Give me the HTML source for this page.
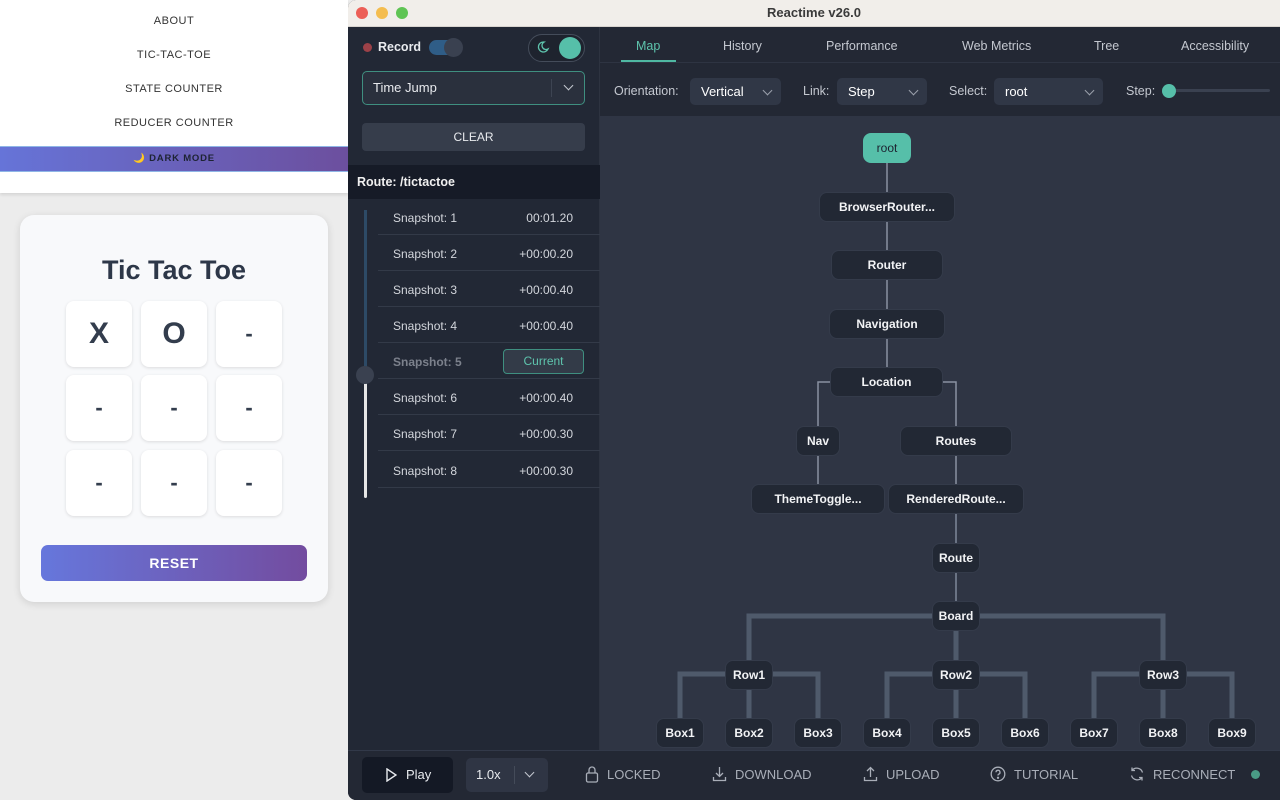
<!DOCTYPE html>
<html><head><meta charset="utf-8"><style>
*{box-sizing:border-box;margin:0;padding:0}
body{width:1280px;height:800px;overflow:hidden;background:#ececec;font-family:"Liberation Sans",sans-serif;position:relative}
.abs{position:absolute}
.nav a{position:absolute;left:0;width:348px;text-align:center;font-size:11px;color:#333;letter-spacing:.5px}
.cell{position:absolute;width:66px;height:66px;background:#fff;border-radius:8px;box-shadow:0 1px 3px rgba(0,0,0,.12);text-align:center;line-height:66px;font-weight:bold;color:#333d4d}
.win{position:absolute;left:348px;top:0;width:932px;height:800px;border-radius:8px 0 0 8px;overflow:hidden;background:#222835;color:#e8eaee;font-size:13px}
.node{position:absolute;height:30px;border-radius:8px;background:#222834;border:1px solid #343b4a;color:#f2f3f5;font-size:12px;font-weight:bold;text-align:center;line-height:28px}
.snap{position:absolute;left:30px;width:222px;height:36px;border-bottom:1px solid #333a48;font-size:12px;color:#d3d6dc;line-height:38px}
.snap span{position:absolute;left:15px}
.snap b{position:absolute;right:27px;font-weight:normal}
.tab{position:absolute;top:39px;font-size:12.5px;color:#c4c8d0}
.sel{position:absolute;top:78px;height:27px;background:#303746;border-radius:5px;font-size:13px;color:#fff;padding-left:11px;line-height:27px}
.lbl{position:absolute;top:84px;font-size:12.5px;color:#c4c8d0}
.chev{position:absolute;right:10px;top:9px;width:7px;height:7px;border-right:1.3px solid #9aa0ab;border-bottom:1.3px solid #9aa0ab;transform:rotate(45deg)}
.bb{position:absolute;top:767px;font-size:13px;color:#a9aeb8}
</style></head><body>
<div class="abs" style="left:0;top:0;width:348px;height:193px;background:#fff;box-shadow:0 2px 3px rgba(0,0,0,.1)"></div>
<div class="nav"><a style="top:15px">ABOUT</a><a style="top:49px">TIC-TAC-TOE</a><a style="top:83px">STATE COUNTER</a><a style="top:117px">REDUCER COUNTER</a></div>
<div class="abs" style="left:0;top:146px;width:348px;height:26px;background:linear-gradient(90deg,#6674d8,#6c4f9e);border-top:1px solid #8fb6e6;border-bottom:1px solid #8fb6e6;text-align:center;line-height:24px;font-size:9.5px;font-weight:bold;letter-spacing:.8px;color:#1d2333">🌙 DARK MODE</div>
<div class="abs" style="left:20px;top:215px;width:308px;height:387px;background:#f8f9fb;border-radius:14px;box-shadow:0 2px 8px rgba(0,0,0,.12)"></div>
<div class="abs" style="left:20px;top:255px;width:308px;text-align:center;font-size:27px;font-weight:bold;color:#2d3748">Tic Tac Toe</div>
<div class="cell" style="left:66px;top:301px;font-size:30px">X</div><div class="cell" style="left:141px;top:301px;font-size:30px">O</div><div class="cell" style="left:216px;top:301px;font-size:22px">-</div>
<div class="cell" style="left:66px;top:375px;font-size:22px">-</div><div class="cell" style="left:141px;top:375px;font-size:22px">-</div><div class="cell" style="left:216px;top:375px;font-size:22px">-</div>
<div class="cell" style="left:66px;top:450px;font-size:22px">-</div><div class="cell" style="left:141px;top:450px;font-size:22px">-</div><div class="cell" style="left:216px;top:450px;font-size:22px">-</div>
<div class="abs" style="left:41px;top:545px;width:266px;height:36px;border-radius:7px;background:linear-gradient(90deg,#6677dc,#734c9f);color:#fff;text-align:center;line-height:36px;font-weight:bold;font-size:14px;letter-spacing:.5px">RESET</div>

<div class="win">
<div class="abs" style="left:0;top:0;width:932px;height:27px;background:#f1eeea;border-bottom:1px solid #d8d4cf"></div>
<div class="abs" style="left:8px;top:7px;width:12px;height:12px;border-radius:50%;background:#ec5f57"></div>
<div class="abs" style="left:28px;top:7px;width:12px;height:12px;border-radius:50%;background:#f4bd4f"></div>
<div class="abs" style="left:48px;top:7px;width:12px;height:12px;border-radius:50%;background:#5fc454"></div>
<div class="abs" style="left:0;top:5px;width:932px;text-align:center;font-size:13px;font-weight:bold;color:#3a3a3a">Reactime v26.0</div>

<div class="abs" style="left:0;top:27px;width:252px;height:723px;background:#222835;border-right:1px solid #2d3340"></div>
<div class="abs" style="left:15px;top:43px;width:9px;height:9px;border-radius:50%;background:#9c4148"></div>
<div class="abs" style="left:30px;top:40px;font-size:12.5px;font-weight:bold">Record</div>
<div class="abs" style="left:81px;top:40px;width:33px;height:15px;border-radius:8px;background:#2f5d87"></div>
<div class="abs" style="left:96px;top:38px;width:19px;height:19px;border-radius:50%;background:#3a4150"></div>
<div class="abs" style="left:180px;top:34px;width:57px;height:28px;border-radius:14px;border:1.5px solid #444c5a;background:#1e232e"></div>
<svg class="abs" style="left:188px;top:40px" width="14" height="14" viewBox="0 0 14 14"><path d="M8 2a5 5 0 1 0 4 7 4 4 0 0 1-4-7z" fill="none" stroke="#5ec4ad" stroke-width="1.3"/></svg>
<div class="abs" style="left:211px;top:37px;width:22px;height:22px;border-radius:50%;background:#56bfa9"></div>
<div class="abs" style="left:14px;top:71px;width:223px;height:34px;border:1.5px solid #3f8f80;border-radius:5px;background:#2a303d"></div>
<div class="abs" style="left:25px;top:80px;font-size:13px">Time Jump</div>
<div class="abs" style="left:203px;top:79px;width:1px;height:18px;background:#3d4452"></div>
<div class="chev" style="left:217px;top:82px;right:auto;border-color:#c4c8d0"></div>
<div class="abs" style="left:14px;top:123px;width:223px;height:28px;border-radius:4px;background:#363d4b;text-align:center;line-height:28px;font-size:12px;color:#e8eaee">CLEAR</div>
<div class="abs" style="left:0;top:165px;width:252px;height:34px;background:#161b27;font-size:12.5px;line-height:34px;padding-left:9px;font-weight:bold;color:#f0f0f0">Route: /tictactoe</div>
<div class="abs" style="left:16px;top:210px;width:3px;height:165px;background:#2d4a66"></div>
<div class="abs" style="left:16px;top:375px;width:3px;height:123px;background:#e6e6e6;border-radius:2px"></div>
<div class="abs" style="left:8px;top:366px;width:18px;height:18px;border-radius:50%;background:#3a4150"></div>
<div class="snap" style="top:199px"><span>Snapshot: 1</span><b style="right:27px">00:01.20</b></div>
<div class="snap" style="top:235px"><span>Snapshot: 2</span><b>+00:00.20</b></div>
<div class="snap" style="top:271px"><span>Snapshot: 3</span><b>+00:00.40</b></div>
<div class="snap" style="top:307px"><span>Snapshot: 4</span><b>+00:00.40</b></div>
<div class="snap" style="top:343px"><span style="color:#7c818c;font-weight:bold">Snapshot: 5</span></div>
<div class="abs" style="left:155px;top:349px;width:81px;height:25px;border:1.2px solid #3f8f80;border-radius:4px;background:#333b48;color:#5ec4ad;font-size:12px;text-align:center;line-height:23px">Current</div>
<div class="snap" style="top:379px"><span>Snapshot: 6</span><b>+00:00.40</b></div>
<div class="snap" style="top:415px"><span>Snapshot: 7</span><b>+00:00.30</b></div>
<div class="snap" style="top:452px"><span>Snapshot: 8</span><b>+00:00.30</b></div>

<div class="abs" style="left:252px;top:27px;width:680px;height:89px;background:#232834"></div>
<div class="abs" style="left:252px;top:62px;width:680px;height:1px;background:#2e3442"></div>
<div class="tab" style="left:288px;color:#5ec4ad">Map</div>
<div class="abs" style="left:273px;top:60px;width:55px;height:2px;background:#4fb8a2"></div>
<div class="tab" style="left:375px">History</div>
<div class="tab" style="left:478px">Performance</div>
<div class="tab" style="left:614px">Web Metrics</div>
<div class="tab" style="left:746px">Tree</div>
<div class="tab" style="left:833px">Accessibility</div>
<div class="lbl" style="left:266px">Orientation:</div>
<div class="sel" style="left:342px;width:91px">Vertical<i class="chev"></i></div>
<div class="lbl" style="left:455px">Link:</div>
<div class="sel" style="left:489px;width:90px">Step<i class="chev"></i></div>
<div class="lbl" style="left:601px">Select:</div>
<div class="sel" style="left:646px;width:109px">root<i class="chev"></i></div>
<div class="lbl" style="left:778px">Step:</div>
<div class="abs" style="left:820px;top:89px;width:102px;height:3px;border-radius:2px;background:#3a4150"></div>
<div class="abs" style="left:814px;top:84px;width:14px;height:14px;border-radius:50%;background:#56bfa9"></div>
<div class="abs" style="left:252px;top:116px;width:680px;height:634px;background:#2f3544"></div>

<svg class="abs" style="left:0;top:0" width="932" height="800" fill="none">
<g stroke="#8a92a2" stroke-width="1.5">
<path d="M539 162V192M539 221V250M539 279V309M539 338V367"/>
<path d="M482 382H470V426M595 382H608V426M470 455V484M608 455V484"/>
</g>
<g stroke="#7f8899" stroke-width="1.5"><path d="M608 513V543M608 572V601"/></g>
<g stroke="#4f5a6b" stroke-width="5">
<path d="M584 616H401V660M632 616H815V660M608 630V660"/>
<path d="M377 674H332V718M425 674H470V718M401 689V718"/>
<path d="M584 674H539V718M632 674H677V718M608 689V718"/>
<path d="M791 674H746V718M839 674H884V718M815 689V718"/>
</g>
</svg>
<div class="node" style="left:515px;top:133px;width:48px;background:#56bfa9;border-color:#56bfa9;color:#1d2230;font-weight:normal">root</div>
<div class="node" style="left:471px;top:192px;width:136px">BrowserRouter...</div>
<div class="node" style="left:483px;top:250px;width:112px">Router</div>
<div class="node" style="left:481px;top:309px;width:116px">Navigation</div>
<div class="node" style="left:482px;top:367px;width:113px">Location</div>
<div class="node" style="left:448px;top:426px;width:44px">Nav</div>
<div class="node" style="left:552px;top:426px;width:112px">Routes</div>
<div class="node" style="left:403px;top:484px;width:134px">ThemeToggle...</div>
<div class="node" style="left:540px;top:484px;width:136px">RenderedRoute...</div>
<div class="node" style="left:584px;top:543px;width:48px">Route</div>
<div class="node" style="left:584px;top:601px;width:48px">Board</div>
<div class="node" style="left:377px;top:660px;width:48px">Row1</div>
<div class="node" style="left:584px;top:660px;width:48px">Row2</div>
<div class="node" style="left:791px;top:660px;width:48px">Row3</div>
<div class="node" style="left:308px;top:718px;width:48px">Box1</div>
<div class="node" style="left:377px;top:718px;width:48px">Box2</div>
<div class="node" style="left:446px;top:718px;width:48px">Box3</div>
<div class="node" style="left:515px;top:718px;width:48px">Box4</div>
<div class="node" style="left:584px;top:718px;width:48px">Box5</div>
<div class="node" style="left:653px;top:718px;width:48px">Box6</div>
<div class="node" style="left:722px;top:718px;width:48px">Box7</div>
<div class="node" style="left:791px;top:718px;width:48px">Box8</div>
<div class="node" style="left:860px;top:718px;width:48px">Box9</div>

<div class="abs" style="left:0;top:750px;width:932px;height:50px;background:#232834;border-top:1px solid #323949"></div>
<div class="abs" style="left:14px;top:757px;width:91px;height:36px;border-radius:5px;background:#141925"></div>
<svg class="abs" style="left:37px;top:768px" width="12" height="14"><path d="M2 1L11 7L2 13Z" fill="none" stroke="#e8eaee" stroke-width="1.4"/></svg>
<div class="abs" style="left:58px;top:767px;font-size:13px">Play</div>
<div class="abs" style="left:118px;top:758px;width:82px;height:34px;border-radius:5px;background:#2f3544"></div>
<div class="abs" style="left:128px;top:767px;font-size:13px">1.0x</div>
<div class="abs" style="left:166px;top:766px;width:1px;height:18px;background:#444b59"></div>
<div class="chev" style="left:178px;top:769px;right:auto;border-color:#c4c8d0"></div>
<svg class="abs" style="left:237px;top:765px" width="14" height="18" fill="none" stroke="#a9aeb8" stroke-width="1.3"><rect x="1.5" y="8" width="11" height="9" rx="1.5"/><path d="M4 8V5a3 3 0 0 1 6 0v3"/></svg>
<div class="bb" style="left:259px">LOCKED</div>
<svg class="abs" style="left:364px;top:766px" width="15" height="16" fill="none" stroke="#a9aeb8" stroke-width="1.3"><path d="M7.5 1v9M4 7l3.5 3.5L11 7M1.5 11v3.5h12V11"/></svg>
<div class="bb" style="left:387px">DOWNLOAD</div>
<svg class="abs" style="left:515px;top:766px" width="15" height="16" fill="none" stroke="#a9aeb8" stroke-width="1.3"><path d="M7.5 11V2M4 5l3.5-3.5L11 5M1.5 11v3.5h12V11"/></svg>
<div class="bb" style="left:538px">UPLOAD</div>
<svg class="abs" style="left:642px;top:766px" width="16" height="16" fill="none" stroke="#a9aeb8" stroke-width="1.3"><circle cx="8" cy="8" r="6.8"/><path d="M6 6.3a2 2 0 1 1 2.6 1.9c-.5.2-.6.6-.6 1.3"/><circle cx="8" cy="11.8" r=".5" fill="#a9aeb8"/></svg>
<div class="bb" style="left:666px">TUTORIAL</div>
<svg class="abs" style="left:781px;top:766px" width="16" height="16" fill="none" stroke="#a9aeb8" stroke-width="1.3"><path d="M13.5 6.5A6 6 0 0 0 3 4.5M2.5 9.5A6 6 0 0 0 13 11.5M3 1.5v3h3M13 14.5v-3h-3"/></svg>
<div class="bb" style="left:805px">RECONNECT</div>
<div class="abs" style="left:903px;top:770px;width:9px;height:9px;border-radius:50%;background:#4a9c86"></div>
</div>
</body></html>
